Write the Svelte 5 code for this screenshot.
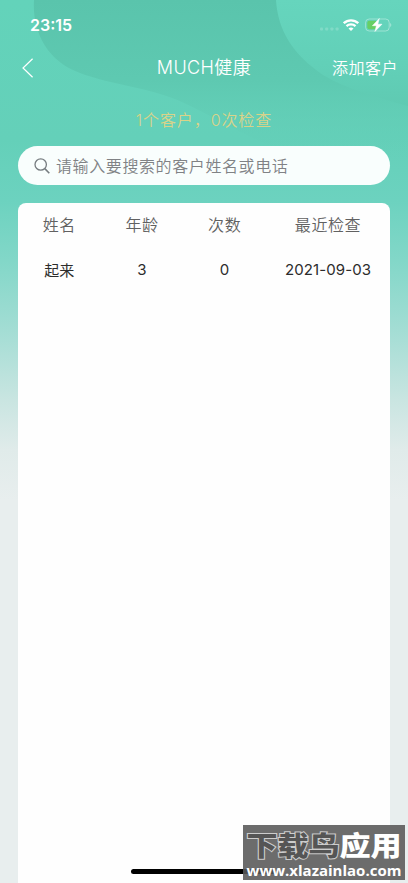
<script>
  let keyword = '';

  const title = 'MUCH健康';
  const columns = ['姓名', '年龄', '次数', '最近检查'];

  let customers = [
    { name: '起来', age: 3, checks: 0, lastCheck: '2021-09-03' },
  ];

  let checkTotal = 0;

  function goBack() {
    history.back();
  }

  function addCustomer() {
    // Implement add customer page
    console.log('Add customer');
  }
</script>

<div class="page" lang="zh-CN">
  <svg class="waves" width="408" height="200" viewBox="0 0 408 200">
    <defs>
      <linearGradient id="wave" gradientUnits="userSpaceOnUse" x1="0" y1="0" x2="0" y2="160">
        <stop offset="0" stop-color="#5ac4ac" />
        <stop offset="0.5" stop-color="#5ec9b1" />
        <stop offset="1" stop-color="#64cfb8" stop-opacity="0" />
      </linearGradient>
      <linearGradient id="corner" x1="0" y1="0" x2="0" y2="1">
        <stop offset="0" stop-color="#66d5bd" />
        <stop offset="0.6" stop-color="#62d0b8" />
        <stop offset="1" stop-color="#5fcab2" />
      </linearGradient>
    </defs>
    <path d="M34 0C32 30 46 61 80 73C112 85 152 88 182 102C218 119 245 136 282 151C320 160 360 162 408 164V0Z" fill="url(#wave)" />
    <path d="M276 0C278 32 294 55 323 75C346 89 376 97 408 106V0Z" fill="url(#corner)" />
  </svg>

  <div class="status-bar">
    <span class="time">23:15</span>
    <div class="status-icons">
      <svg class="signal" width="19" height="4" viewBox="0 0 19 4" fill="#fff" opacity="0.18">
        <rect x="0" y="0.5" width="3" height="3" rx="0.8" />
        <rect x="5.2" y="0.5" width="3" height="3" rx="0.8" />
        <rect x="10.4" y="0.5" width="3" height="3" rx="0.8" />
        <rect x="15.6" y="0.5" width="3" height="3" rx="0.8" />
      </svg>
      <svg class="wifi" width="16" height="12" viewBox="0 0 16 12" fill="none" stroke="#fff" stroke-width="2.3">
        <path d="M0.8 4.2C4.8 0.3 11.2 0.3 15.2 4.2" />
        <path d="M3.5 7.1C6 4.7 10 4.7 12.5 7.1" />
        <path d="M8 12L5.5 9.5C6.9 8.2 9.1 8.2 10.5 9.5Z" fill="#fff" stroke="none" />
      </svg>
      <svg class="battery" width="27" height="14" viewBox="0 0 27 14">
        <rect x="0.6" y="1" width="23.6" height="12" rx="3.6" fill="none" stroke="#fff" stroke-opacity="0.36" />
        <path d="M25.3 5V9C26.6 8.5 26.6 5.5 25.3 5Z" fill="#fff" opacity="0.5" />
        <path d="M4.3 2.8H11V11.2H4.3Q2.3 11.2 2.3 9.2V4.8Q2.3 2.8 4.3 2.8Z" fill="#67cf65" />
        <path d="M14.3 0.5L7.4 7.7H11.4L9.9 13.5L17 6.2H12.8Z" fill="#fff" stroke="#fff" stroke-width="0.5" />
      </svg>
    </div>
  </div>

  <header>
    <button class="back" aria-label="返回" on:click={goBack}>
      <svg width="12" height="20" viewBox="0 0 12 20" fill="none" stroke="#fff" stroke-width="1.2">
        <path d="M10.6 0.7L1 10L10.6 19.3" />
      </svg>
    </button>
    <h1>{title}</h1>
    <button class="add" on:click={addCustomer}>添加客户</button>
  </header>

  <p class="summary">{customers.length}个客户<span class="comma">，</span>{checkTotal}次检查</p>

  <label class="search">
    <svg width="16" height="16" viewBox="0 0 16 16" fill="none" stroke="#777d80" stroke-width="1.3">
      <circle cx="6.7" cy="6.5" r="5.7" />
      <path d="M10.8 10.6L15.3 15.2" stroke-width="1.6" />
    </svg>
    <input type="text" bind:value={keyword} placeholder="请输入要搜索的客户姓名或电话">
  </label>

  <section class="card">
    <div class="row head">
      {#each columns as column}
        <span>{column}</span>
      {/each}
    </div>
    {#each customers as customer}
      <div class="row">
        <span>{customer.name}</span>
        <span>{customer.age}</span>
        <span>{customer.checks}</span>
        <span>{customer.lastCheck}</span>
      </div>
    {/each}
  </section>

  <div class="home-indicator"></div>

  <div class="watermark">
    <div class="brand"><span class="outlined">下载鸟</span><span>应用</span></div>
    <div class="site">www.xlazainlao.com</div>
  </div>
</div>

<style>
  :global(body) {
    margin: 0;
  }

  .page {
    position: relative;
    display: flex;
    flex-direction: column;
    box-sizing: border-box;
    width: 408px;
    height: 883px;
    padding: 0 18px;
    overflow: hidden;
    background: linear-gradient(#63d3ba 0, #64d0b9 140px, #6cd2bf 200px, #82d7c8 260px, #a3ddd4 330px, #c9e5e1 400px, #e0ebea 450px, #e8eeee 500px);
    font-family: Inter, "Noto Sans CJK SC", sans-serif;
  }

  .waves {
    position: absolute;
    top: 0;
    left: 0;
  }

  .status-bar,
  header,
  .summary,
  .search,
  .card {
    position: relative;
  }

  .status-bar {
    display: flex;
    align-items: center;
    justify-content: space-between;
    height: 44px;
    padding: 6px 0 0 12px;
    box-sizing: border-box;
    color: #fff;
  }

  .time {
    font-size: 16px;
    font-weight: 600;
    line-height: 20px;
  }

  .status-icons {
    display: flex;
    align-items: center;
    margin-right: -2px;
  }

  .signal {
    margin: 8px 4px 0 0;
  }

  .wifi {
    margin-right: 6px;
  }

  header {
    display: grid;
    grid-template-columns: 1fr auto 1fr;
    align-items: center;
    height: 48px;
    margin-right: -8px;
    margin-left: -8px;
    color: #fff;
  }

  button {
    padding: 0;
    border: 0;
    background: none;
    color: inherit;
    font-family: inherit;
    cursor: pointer;
  }

  .back {
    display: flex;
    justify-self: start;
    padding-left: 12px;
  }

  h1 {
    margin: 0;
    font-size: 18px;
    font-weight: 350;
    letter-spacing: 0.4px;
    line-height: 24px;
  }

  .add {
    justify-self: end;
    font-size: 16px;
    font-weight: 350;
    letter-spacing: 0.5px;
    line-height: 24px;
  }

  .summary {
    height: 24px;
    margin: 15px 0;
    color: #d9d389;
    font-size: 16px;
    font-weight: 350;
    letter-spacing: 0.9px;
    line-height: 24px;
    text-align: center;
  }

  .comma {
    font-family: "Noto Sans CJK SC", sans-serif;
  }

  .search {
    display: flex;
    flex-shrink: 0;
    align-items: center;
    gap: 6px;
    box-sizing: border-box;
    height: 39px;
    padding: 0 16px;
    border-radius: 20px;
    background: #f9fefd;
  }

  input {
    flex: 1;
    min-width: 0;
    padding: 0;
    border: 0;
    outline: none;
    background: none;
    color: #333;
    font-family: inherit;
    font-size: 16px;
    font-weight: 350;
    letter-spacing: 0.6px;
  }

  input::placeholder {
    color: #808285;
    opacity: 1;
  }

  .card {
    flex: 1;
    margin-top: 17.5px;
    border-radius: 8px 8px 0 0;
    background: #fefefe;
  }

  .row {
    display: grid;
    grid-template-columns: 2fr 2fr 2fr 3fr;
    align-items: center;
    height: 48px;
    color: #2c2c2c;
    font-size: 15px;
    letter-spacing: 0.1px;
    text-align: center;
  }

  .head {
    height: 42.5px;
    color: #616161;
    font-size: 16px;
    font-weight: 350;
    letter-spacing: 0.6px;
  }

  .home-indicator {
    position: absolute;
    bottom: 9px;
    left: 131px;
    width: 145px;
    height: 5px;
    border-radius: 3px;
    background: #000;
  }

  .watermark {
    position: absolute;
    right: 3px;
    bottom: 3px;
    display: flex;
    flex-direction: column;
    width: 162px;
    height: 55px;
    background: rgba(88, 88, 88, 0.88);
    color: #fff;
    text-align: center;
    white-space: nowrap;
  }

  .brand {
    display: flex;
    justify-content: center;
    height: 36px;
    font-family: "Noto Sans CJK SC", sans-serif;
    font-size: 27px;
    font-weight: 900;
    line-height: 40px;
    transform: scaleX(1.15);
  }

  .brand span {
    height: 36px;
  }

  .outlined {
    color: #555;
    -webkit-text-stroke: 2px #ccc;
    paint-order: stroke fill;
  }

  .site {
    font-family: "Open Sans", sans-serif;
    font-size: 15px;
    font-weight: 700;
    line-height: 18px;
  }
</style>
